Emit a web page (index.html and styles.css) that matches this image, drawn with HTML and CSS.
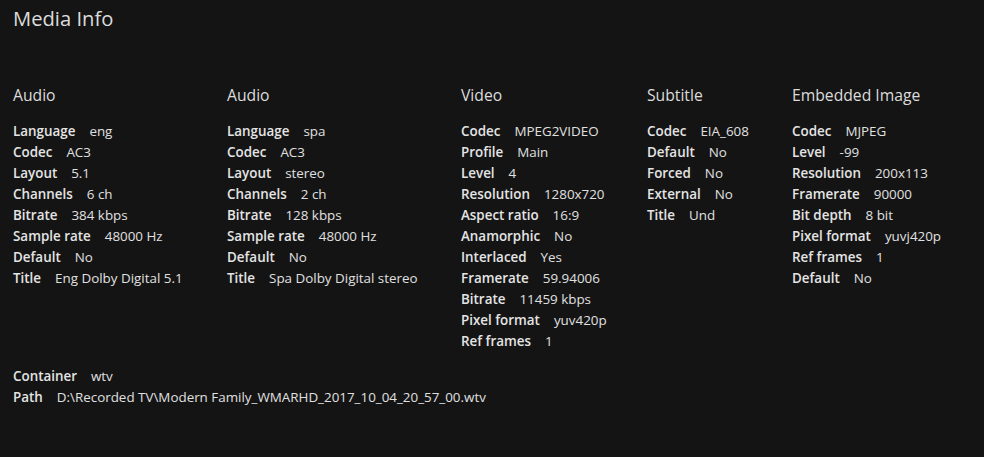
FILE: index.html
```html
<!DOCTYPE html>
<html>
<head>
<meta charset="utf-8">
<link rel="stylesheet" href="styles.css">
</head>
<body>
<div class="page">
  <h1 class="title">Media Info</h1>
  <div class="streams">
    <section class="stream">
      <h2 class="stream-title">Audio</h2>
      <div class="row"><span class="label">Language</span><span class="value">eng</span></div>
      <div class="row"><span class="label">Codec</span><span class="value">AC3</span></div>
      <div class="row"><span class="label">Layout</span><span class="value">5.1</span></div>
      <div class="row"><span class="label">Channels</span><span class="value">6 ch</span></div>
      <div class="row"><span class="label">Bitrate</span><span class="value">384 kbps</span></div>
      <div class="row"><span class="label">Sample rate</span><span class="value">48000 Hz</span></div>
      <div class="row"><span class="label">Default</span><span class="value">No</span></div>
      <div class="row"><span class="label">Title</span><span class="value">Eng Dolby Digital 5.1</span></div>
    </section>
    <section class="stream">
      <h2 class="stream-title">Audio</h2>
      <div class="row"><span class="label">Language</span><span class="value">spa</span></div>
      <div class="row"><span class="label">Codec</span><span class="value">AC3</span></div>
      <div class="row"><span class="label">Layout</span><span class="value">stereo</span></div>
      <div class="row"><span class="label">Channels</span><span class="value">2 ch</span></div>
      <div class="row"><span class="label">Bitrate</span><span class="value">128 kbps</span></div>
      <div class="row"><span class="label">Sample rate</span><span class="value">48000 Hz</span></div>
      <div class="row"><span class="label">Default</span><span class="value">No</span></div>
      <div class="row"><span class="label">Title</span><span class="value">Spa Dolby Digital stereo</span></div>
    </section>
    <section class="stream">
      <h2 class="stream-title">Video</h2>
      <div class="row"><span class="label">Codec</span><span class="value">MPEG2VIDEO</span></div>
      <div class="row"><span class="label">Profile</span><span class="value">Main</span></div>
      <div class="row"><span class="label">Level</span><span class="value">4</span></div>
      <div class="row"><span class="label">Resolution</span><span class="value">1280x720</span></div>
      <div class="row"><span class="label">Aspect ratio</span><span class="value">16:9</span></div>
      <div class="row"><span class="label">Anamorphic</span><span class="value">No</span></div>
      <div class="row"><span class="label">Interlaced</span><span class="value">Yes</span></div>
      <div class="row"><span class="label">Framerate</span><span class="value">59.94006</span></div>
      <div class="row"><span class="label">Bitrate</span><span class="value">11459 kbps</span></div>
      <div class="row"><span class="label">Pixel format</span><span class="value">yuv420p</span></div>
      <div class="row"><span class="label">Ref frames</span><span class="value">1</span></div>
    </section>
    <section class="stream">
      <h2 class="stream-title">Subtitle</h2>
      <div class="row"><span class="label">Codec</span><span class="value">EIA_608</span></div>
      <div class="row"><span class="label">Default</span><span class="value">No</span></div>
      <div class="row"><span class="label">Forced</span><span class="value">No</span></div>
      <div class="row"><span class="label">External</span><span class="value">No</span></div>
      <div class="row"><span class="label">Title</span><span class="value">Und</span></div>
    </section>
    <section class="stream">
      <h2 class="stream-title">Embedded Image</h2>
      <div class="row"><span class="label">Codec</span><span class="value">MJPEG</span></div>
      <div class="row"><span class="label">Level</span><span class="value">-99</span></div>
      <div class="row"><span class="label">Resolution</span><span class="value">200x113</span></div>
      <div class="row"><span class="label">Framerate</span><span class="value">90000</span></div>
      <div class="row"><span class="label">Bit depth</span><span class="value">8 bit</span></div>
      <div class="row"><span class="label">Pixel format</span><span class="value">yuvj420p</span></div>
      <div class="row"><span class="label">Ref frames</span><span class="value">1</span></div>
      <div class="row"><span class="label">Default</span><span class="value">No</span></div>
    </section>
  </div>
  <div class="file-info">
    <div class="row"><span class="label">Container</span><span class="value">wtv</span></div>
    <div class="row"><span class="label">Path</span><span class="value">D:\Recorded TV\Modern Family_WMARHD_2017_10_04_20_57_00.wtv</span></div>
  </div>
</div>
</body>
</html>
```

FILE: styles.css
```css
html, body {
  margin: 0;
  padding: 0;
  background: #141414;
}
body {
  width: 984px;
  height: 457px;
  overflow: hidden;
  font-family: "Open Sans", "Noto Sans", sans-serif;
  color: #e0e0e0;
}
.page {
  padding: 4px 13px 0 13px;
}
.title {
  margin: 0;
  font-size: 20.2px;
  font-weight: 400;
  line-height: 28px;
  color: #dcdcdc;
}
.streams {
  display: grid;
  grid-template-columns: 214px 234px 186px 145px auto;
  margin-top: 52px;
}
.stream-title {
  margin: 0 0 15px 0;
  font-size: 15.7px;
  font-weight: 400;
  line-height: 22px;
  color: #dcdcdc;
}
.row {
  display: flex;
  align-items: baseline;
  gap: 14px;
  line-height: 21px;
  white-space: nowrap;
}
.label {
  font-size: 13.4px;
  font-weight: 600;
  color: #e4e4e4;
}
.value {
  font-size: 13.4px;
  color: #e0e0e0;
}
.file-info {
  margin-top: 14px;
}
```
